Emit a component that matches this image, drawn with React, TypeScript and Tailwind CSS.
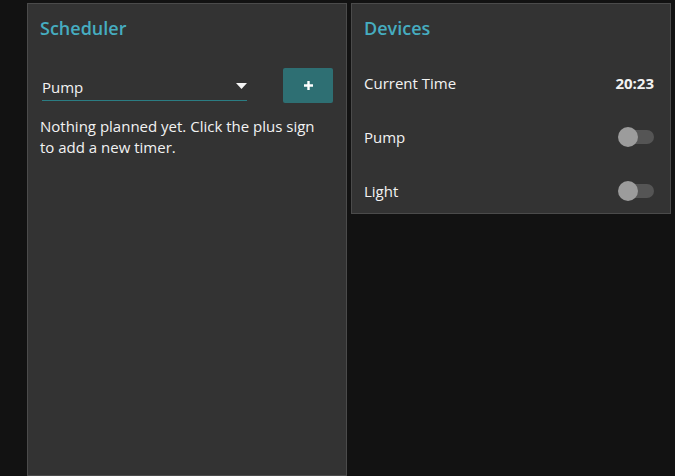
import { useState } from "react";

function Toggle({ on, onClick }: { on: boolean; onClick: () => void }) {
  return (
    <button onClick={onClick} className="relative w-[36px] h-[20px] flex items-center">
      <span className="absolute left-[2px] right-0 h-[14px] rounded-full bg-[#555555]" />
      <span className="absolute left-0 w-[20px] h-[20px] rounded-full bg-[#9c9c9c]" />
    </button>
  );
}

export default function App() {
  const [pump, setPump] = useState(false);
  const [light, setLight] = useState(false);

  return (
    <div
      className="h-screen bg-[#121212] text-[#f2f2f2] flex items-stretch gap-[4px] pl-[27px] pt-[3px] overflow-hidden"
      style={{ fontFamily: '"Open Sans", "Noto Sans", sans-serif' }}
    >
      {/* Scheduler */}
      <div className="w-[320px] bg-[#333333] border border-[#4b4b4b] pl-[12px] pr-[13px] pt-[11px]">
        <h2 className="text-[18px] font-semibold text-[#46adc0] leading-[26px]">Scheduler</h2>
        <div className="flex items-start mt-[27px]">
          <div className="w-[205px] ml-[2px] mt-[4px] border-b border-[#2b7d83] flex items-end justify-between h-[29px] pb-[3px]">
            <span className="text-[15px] leading-[20px]">Pump</span>
            <svg width="11" height="6" viewBox="0 0 11 6" className="mb-[8px]">
              <path d="M0 0h11L5.5 6z" fill="#f5f5f5" />
            </svg>
          </div>
          <button className="ml-auto w-[50px] h-[35px] rounded-[2px] bg-[#2e6f73] flex items-center justify-center">
            <svg width="9" height="9" viewBox="0 0 9 9">
              <path d="M3.3 0h2.4v3.3H9v2.4H5.7V9H3.3V5.7H0V3.3h3.3z" fill="#fff" />
            </svg>
          </button>
        </div>
        <p className="text-[15px] leading-[21px] mt-[13px] pr-[10px]">
          Nothing planned yet. Click the plus sign to add a new timer.
        </p>
      </div>

      {/* Devices */}
      <div className="w-[320px] self-start bg-[#333333] border border-[#4b4b4b] pl-[12px] pr-[13px] pt-[11px]">
        <h2 className="text-[18px] font-semibold text-[#46adc0] leading-[26px]">Devices</h2>
        <div className="mt-[20px] flex flex-col gap-[10px]">
          <div className="h-[44px] flex items-center justify-between pr-[3px]">
            <span className="text-[15px]">Current Time</span>
            <span className="text-[15px] font-bold">20:23</span>
          </div>
          <div className="h-[44px] flex items-center justify-between pr-[3px]">
            <span className="text-[15px]">Pump</span>
            <Toggle on={pump} onClick={() => setPump(!pump)} />
          </div>
          <div className="h-[44px] flex items-center justify-between pr-[3px]">
            <span className="text-[15px]">Light</span>
            <Toggle on={light} onClick={() => setLight(!light)} />
          </div>
        </div>
      </div>
    </div>
  );
}
